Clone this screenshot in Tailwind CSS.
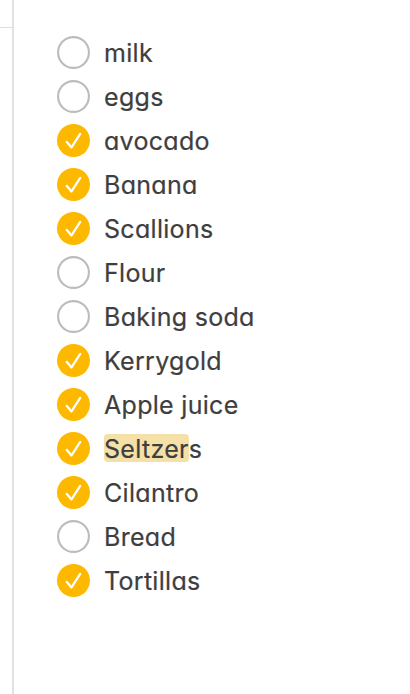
<!DOCTYPE html>
<html lang="en">
<head>
<meta charset="utf-8">
<title>Notes</title>
<script src="https://cdn.jsdelivr.net/npm/@tailwindcss/browser@4"></script>
</head>
<body class="bg-white">
<svg class="hidden">
  <symbol id="off" viewBox="0 0 33 33"><circle cx="16.5" cy="16.5" r="15.4" fill="none" stroke="#bcbcbc" stroke-width="2.1"/></symbol>
  <symbol id="on" viewBox="0 0 33 33"><circle cx="16.5" cy="16.5" r="16.5" fill="#fdb900"/><path d="M9.8 17.9 14.5 23.4 23.2 9.9" fill="none" stroke="#fff" stroke-width="2.3" stroke-linecap="round" stroke-linejoin="round"/></symbol>
</svg>
<div class="flex h-[694px] w-[410px] overflow-hidden bg-white">
  <aside class="w-3 shrink-0"><div class="h-7 border-b border-[#dedede]"></div></aside>
  <div class="w-[2px] shrink-0 bg-[#e2e2e2]"></div>
  <ul class="flex flex-col pl-[43px] pt-[30px] font-['Inter','Noto_Sans',sans-serif] text-[25px] tracking-[0.3px] text-[#3e3e3e] [-webkit-text-stroke:0.2px_#3e3e3e] [font-feature-settings:'cv11'] *:flex *:h-11 *:items-center *:gap-[14px] [&_svg]:size-[33px] [&_svg]:shrink-0 [&_span]:whitespace-nowrap [&_span]:pt-[3px]">
    <li><svg><use href="#off"/></svg><span>milk</span></li>
    <li><svg><use href="#off"/></svg><span>eggs</span></li>
    <li><svg><use href="#on"/></svg><span>avocado</span></li>
    <li><svg><use href="#on"/></svg><span>Banana</span></li>
    <li><svg><use href="#on"/></svg><span>Scallions</span></li>
    <li><svg><use href="#off"/></svg><span>Flour</span></li>
    <li><svg><use href="#off"/></svg><span>Baking soda</span></li>
    <li><svg><use href="#on"/></svg><span>Kerrygold</span></li>
    <li><svg><use href="#on"/></svg><span>Apple juice</span></li>
    <li><svg><use href="#on"/></svg><span><mark class="inline-block rounded-[4px] bg-[#f5e1a8] pt-[2px] leading-[26px] text-inherit">Seltzer</mark>s</span></li>
    <li><svg><use href="#on"/></svg><span>Cilantro</span></li>
    <li><svg><use href="#off"/></svg><span>Bread</span></li>
    <li><svg><use href="#on"/></svg><span>Tortillas</span></li>
  </ul>
</div>
</body>
</html>
